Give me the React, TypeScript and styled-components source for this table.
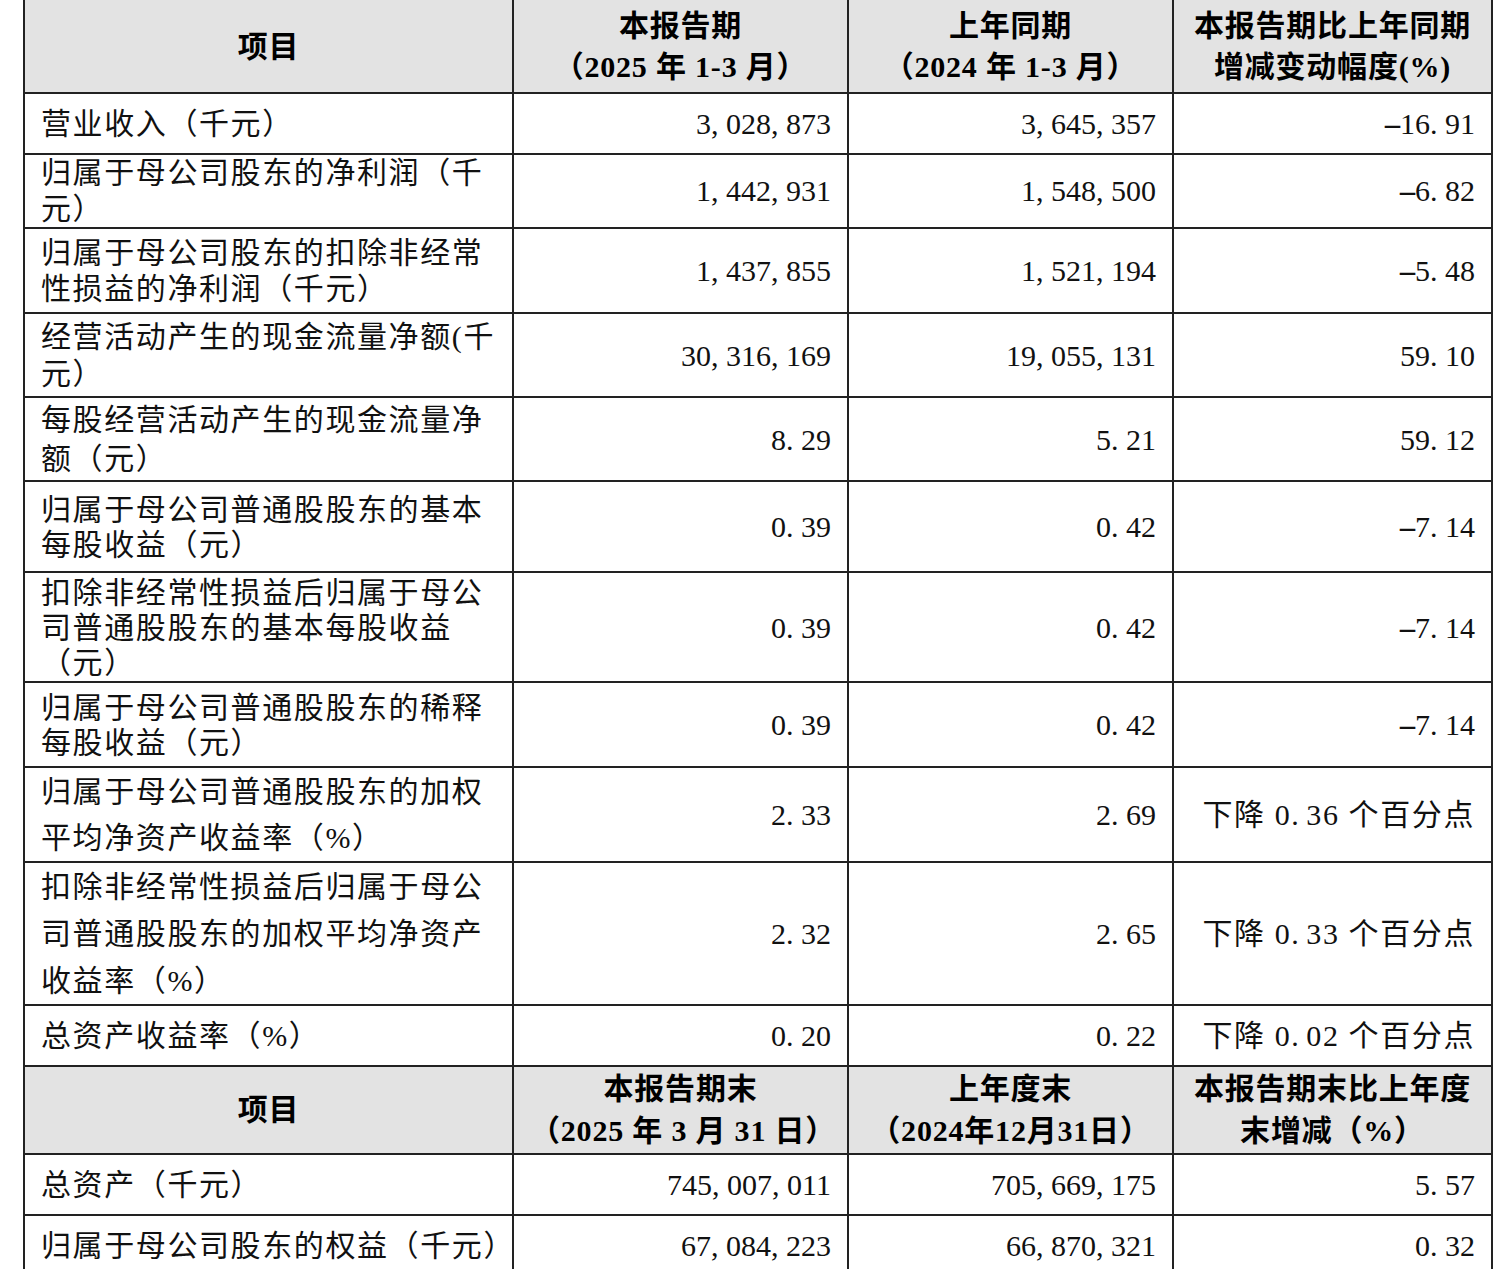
import React from "react";
import styled, { createGlobalStyle } from "styled-components";

const Global = createGlobalStyle`
  html, body { margin: 0; padding: 0; background: #ffffff; }
  body { font-family: "Liberation Serif", "Noto Sans CJK SC", serif; color: #111; }
`;

const Page = styled.div`
  padding: 0 9px 0 23px;
  width: 1468px;
`;

const Table = styled.table`
  border-collapse: collapse;
  table-layout: fixed;
  width: 1468px;
  font-size: 30px;
`;

const Row = styled.tr<{ $h: number }>`
  height: ${(p) => p.$h}px;
`;

const Cell = styled.td<{ $lh?: number; $first?: boolean }>`
  border: 2px solid #222;
  ${(p) => (p.$first ? "border-top: none;" : "")}
  padding: 0 16px;
  vertical-align: middle;
  line-height: ${(p) => p.$lh ?? 36}px;
  text-align: right;
  white-space: nowrap;
  letter-spacing: 0;
`;

const LabelCell = styled(Cell)`
  text-align: left;
  letter-spacing: 1.6px;
`;

const ValueText = styled.span`
  letter-spacing: 0;
`;

const CjkValue = styled.span`
  letter-spacing: 1.6px;
`;

const HeadCell = styled(Cell)`
  background: #e3e3e3;
  text-align: center;
  font-weight: 600;
  color: #000;
  letter-spacing: 0.8px;
`;

const Line = styled.div``;

const Punct = styled.span`
  margin-right: 0.25em;
`;

const Minus = styled.span`
  display: inline-block;
  width: 0.5em;
  text-align: center;
  transform: scaleX(2);
`;

const Num: React.FC<{ v: string }> = ({ v }) => {
  const parts: React.ReactNode[] = [];
  let buf = "";
  let k = 0;
  const flush = () => {
    if (buf) {
      const isCjk = /[\u4e00-\u9fff]/.test(buf);
      parts.push(isCjk ? <CjkValue key={k++}>{buf}</CjkValue> : <ValueText key={k++}>{buf}</ValueText>);
    }
    buf = "";
  };
  for (const ch of v) {
    if (ch === "." || ch === ",") {
      flush();
      parts.push(<Punct key={k++}>{ch}</Punct>);
    } else if (ch === "-") {
      flush();
      parts.push(<Minus key={k++}>-</Minus>);
    } else {
      buf += ch;
    }
  }
  flush();
  return <>{parts}</>;
};

type DataRow = {
  kind: "data";
  h: number;
  lh?: number;
  label: string[];
  a: string;
  b: string;
  c: string;
};
type HeadRow = {
  kind: "head";
  h: number;
  lh: number;
  cols: string[][];
};

const rows: (DataRow | HeadRow)[] = [
  {
    kind: "head",
    h: 93,
    lh: 41,
    cols: [
      ["项目"],
      ["本报告期", "（2025 年 1-3 月）"],
      ["上年同期", "（2024 年 1-3 月）"],
      ["本报告期比上年同期", "增减变动幅度(%)"],
    ],
  },
  { kind: "data", h: 61, label: ["营业收入（千元）"], a: "3,028,873", b: "3,645,357", c: "-16.91" },
  { kind: "data", h: 74, lh: 36, label: ["归属于母公司股东的净利润（千", "元）"], a: "1,442,931", b: "1,548,500", c: "-6.82" },
  { kind: "data", h: 85, lh: 36, label: ["归属于母公司股东的扣除非经常", "性损益的净利润（千元）"], a: "1,437,855", b: "1,521,194", c: "-5.48" },
  { kind: "data", h: 84, lh: 37, label: ["经营活动产生的现金流量净额(千", "元）"], a: "30,316,169", b: "19,055,131", c: "59.10" },
  { kind: "data", h: 84, lh: 39, label: ["每股经营活动产生的现金流量净", "额（元）"], a: "8.29", b: "5.21", c: "59.12" },
  { kind: "data", h: 91, lh: 35, label: ["归属于母公司普通股股东的基本", "每股收益（元）"], a: "0.39", b: "0.42", c: "-7.14" },
  { kind: "data", h: 110, lh: 35, label: ["扣除非经常性损益后归属于母公", "司普通股股东的基本每股收益", "（元）"], a: "0.39", b: "0.42", c: "-7.14" },
  { kind: "data", h: 85, lh: 35, label: ["归属于母公司普通股股东的稀释", "每股收益（元）"], a: "0.39", b: "0.42", c: "-7.14" },
  { kind: "data", h: 95, lh: 46, label: ["归属于母公司普通股股东的加权", "平均净资产收益率（%）"], a: "2.33", b: "2.69", c: "下降 0.36 个百分点" },
  { kind: "data", h: 142, lh: 47, label: ["扣除非经常性损益后归属于母公", "司普通股股东的加权平均净资产", "收益率（%）"], a: "2.32", b: "2.65", c: "下降 0.33 个百分点" },
  { kind: "data", h: 61, label: ["总资产收益率（%）"], a: "0.20", b: "0.22", c: "下降 0.02 个百分点" },
  {
    kind: "head",
    h: 88,
    lh: 42,
    cols: [
      ["项目"],
      ["本报告期末", "（2025 年 3 月 31 日）"],
      ["上年度末", "（2024年12月31日）"],
      ["本报告期末比上年度", "末增减（%）"],
    ],
  },
  { kind: "data", h: 61, label: ["总资产（千元）"], a: "745,007,011", b: "705,669,175", c: "5.57" },
  { kind: "data", h: 61, label: ["归属于母公司股东的权益（千元）"], a: "67,084,223", b: "66,870,321", c: "0.32" },
];

const Lines: React.FC<{ lines: string[] }> = ({ lines }) => (
  <>
    {lines.map((l, i) => (
      <Line key={i}>{l}</Line>
    ))}
  </>
);

export default function App() {
  return (
    <Page>
      <Global />
      <Table>
        <colgroup>
          <col style={{ width: 489 }} />
          <col style={{ width: 335 }} />
          <col style={{ width: 325 }} />
          <col style={{ width: 319 }} />
        </colgroup>
        <tbody>
          {rows.map((r, i) =>
            r.kind === "head" ? (
              <Row key={i} $h={r.h}>
                {r.cols.map((c, j) => (
                  <HeadCell key={j} $lh={r.lh} $first={i === 0}>
                    <Lines lines={c} />
                  </HeadCell>
                ))}
              </Row>
            ) : (
              <Row key={i} $h={r.h}>
                <LabelCell $lh={r.lh}>
                  <Lines lines={r.label} />
                </LabelCell>
                <Cell $lh={r.lh}>
                  <Num v={r.a} />
                </Cell>
                <Cell $lh={r.lh}>
                  <Num v={r.b} />
                </Cell>
                <Cell $lh={r.lh}>
                  <Num v={r.c} />
                </Cell>
              </Row>
            )
          )}
        </tbody>
      </Table>
    </Page>
  );
}
